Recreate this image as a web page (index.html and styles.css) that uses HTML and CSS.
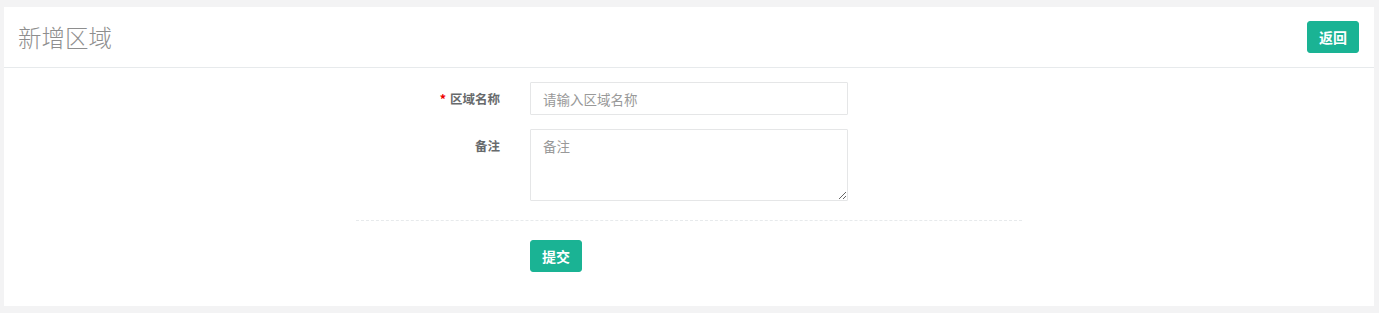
FILE: index.html
```html
<!DOCTYPE html>
<html lang="zh-CN">
<head>
<meta charset="utf-8">
<title>新增区域</title>
<link rel="stylesheet" href="styles.css">
</head>
<body>
<div class="panel">
  <div class="panel-head">
    <h2 class="panel-title">新增区域</h2>
    <button class="btn" type="button">返回</button>
  </div>
  <div class="panel-body">
    <form class="form">
      <div class="row">
        <label class="label"><span class="req">*</span>区域名称</label>
        <input class="control" type="text" placeholder="请输入区域名称">
      </div>
      <div class="row row-top">
        <label class="label label-top">备注</label>
        <textarea class="control area" placeholder="备注"></textarea>
      </div>
      <div class="dashed"></div>
      <div class="row">
        <span></span>
        <button class="btn" type="submit">提交</button>
      </div>
    </form>
  </div>
</div>
</body>
</html>
```

FILE: styles.css
```css
* { box-sizing: border-box; }
html, body { margin: 0; }
body {
  background: #f3f3f4;
  font-family: "Liberation Sans", "Noto Sans CJK SC", sans-serif;
  color: #676a6c;
  padding: 7px 5px 0 4px;
  height: 313px;
}
.panel {
  background: #fff;
  height: 299px;
}
.panel-head {
  height: 61px;
  border-bottom: 1px solid #e7eaec;
  display: flex;
  align-items: center;
  justify-content: space-between;
  padding: 0 15px 0 14px;
}
.panel-title {
  margin: 0;
  font-family: "Noto Sans CJK SC", sans-serif;
  font-weight: 300;
  font-size: 23.5px;
  color: #8e8e8e;
}
.btn {
  background: #1ab394;
  border: 1px solid #1ab394;
  color: #fff;
  border-radius: 3px;
  height: 32px;
  width: 52px;
  padding: 0;
  font-family: "Noto Sans CJK SC", sans-serif;
  font-size: 14px;
  font-weight: 700;
  cursor: pointer;
}
.panel-body {
  padding: 14px 0 0;
}
.form {
  width: 666px;
  margin: 0 auto;
  display: flex;
  flex-direction: column;
}
.row {
  display: grid;
  grid-template-columns: 144px 318px;
  column-gap: 30px;
  align-items: center;
  margin-bottom: 14px;
}
.row-top { align-items: start; margin-bottom: 19px; }
.label {
  text-align: right;
  font-family: "Noto Sans CJK SC", sans-serif;
  font-weight: 700;
  font-size: 12.5px;
  color: #676a6c;
}
.label-top { padding-top: 7px; }
.req { color: #e00; margin-right: 4px; }
.control {
  height: 33px;
  border: 1px solid #e5e6e7;
  border-radius: 1px;
  padding: 6px 12px;
  font-family: "Noto Sans CJK SC", sans-serif;
  font-size: 13.5px;
  color: #676a6c;
  outline: none;
  background: #fff;
}
.control::placeholder { color: #999; }
.area {
  height: 72px;
  resize: vertical;
  display: block;
}
.dashed {
  border-top: 1px dashed #e7eaec;
  margin-bottom: 19px;
}
```
